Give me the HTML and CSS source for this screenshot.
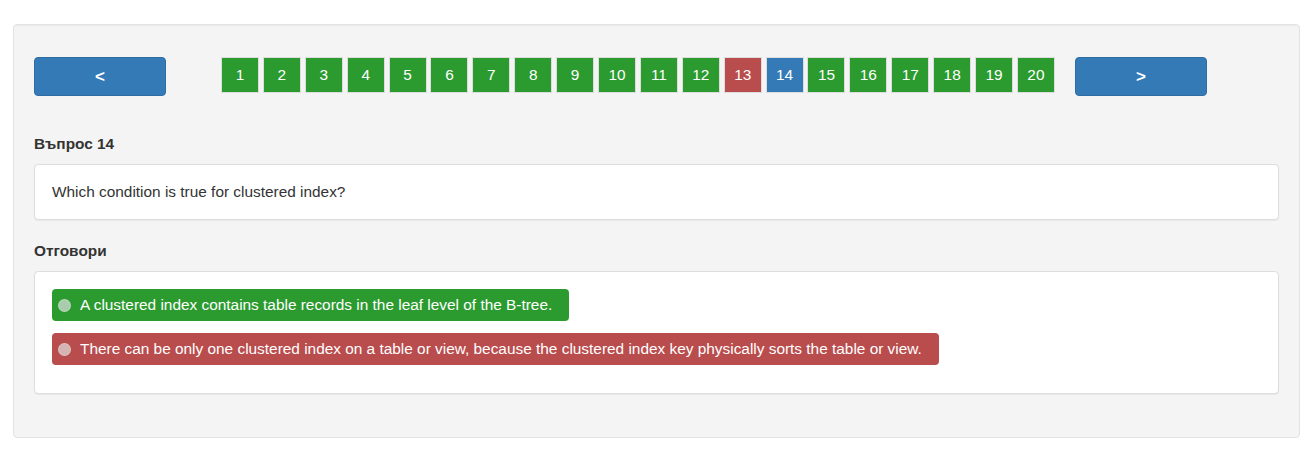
FILE: index.html
```html
<!DOCTYPE html>
<html lang="bg">
<head>
<meta charset="utf-8">
<title>Тест</title>
<link rel="stylesheet" href="styles.css">
</head>
<body>
<div class="well">
  <div class="nav">
    <button class="btn-nav">&lt;</button>
    <div class="pages"><span class="pg ok">1</span> <span class="pg ok">2</span> <span class="pg ok">3</span> <span class="pg ok">4</span> <span class="pg ok">5</span> <span class="pg ok">6</span> <span class="pg ok">7</span> <span class="pg ok">8</span> <span class="pg ok">9</span> <span class="pg ok">10</span> <span class="pg ok">11</span> <span class="pg ok">12</span> <span class="pg bad">13</span> <span class="pg cur">14</span> <span class="pg ok">15</span> <span class="pg ok">16</span> <span class="pg ok">17</span> <span class="pg ok">18</span> <span class="pg ok">19</span> <span class="pg ok">20</span></div>
    <button class="btn-nav">&gt;</button>
  </div>

  <div class="label">Въпрос 14</div>
  <div class="panel question">Which condition is true for clustered index?</div>

  <div class="label">Отговори</div>
  <div class="panel answers">
    <div class="answer"><span class="item correct"><span class="radio"></span>A clustered index contains table records in the leaf level of the B-tree.</span></div>
    <div class="answer"><span class="item wrong"><span class="radio"></span>There can be only one clustered index on a table or view, because the clustered index key physically sorts the table or view.</span></div>
  </div>
</div>
</body>
</html>
```

FILE: styles.css
```css
* { box-sizing: border-box; }

body {
  margin: 24px 11px 0 13px;
  font-family: "Liberation Sans", Arial, sans-serif;
  font-size: 15.4px;
  line-height: 20px;
  color: #333;
  background: #fff;
}

.well {
  background: #f4f4f4;
  border: 1px solid #e3e3e3;
  border-radius: 4px;
  box-shadow: inset 0 1px 1px rgba(0,0,0,0.04);
  padding: 32px 20px 43px 20px;
}

.nav {
  display: flex;
  align-items: flex-start;
  height: 39px;
  margin-bottom: 38px;
}

.btn-nav {
  width: 132px;
  height: 39px;
  background: #337ab7;
  border: 1px solid #2e6da4;
  border-radius: 4px;
  color: #fff;
  font-family: "Liberation Sans", Arial, sans-serif;
  font-size: 17px;
  font-weight: bold;
  padding: 0;
  line-height: 37px;
}

.pages {
  margin: 0 20px 0 55px;
  white-space: nowrap;
  font-size: 14px;
}

.pg {
  display: inline-block;
  width: 38px;
  height: 36px;
  line-height: 34px;
  text-align: center;
  color: #fff;
  border: 1px solid #ddd;
  font-size: 15.4px;
  vertical-align: top;
}

.pg.ok { background: #2b9b2f; }
.pg.bad { background: #b94c4c; }
.pg.cur { background: #337ab7; }

.label {
  font-weight: bold;
  margin-bottom: 10px;
}

.panel {
  background: #fff;
  border: 1px solid #ddd;
  border-radius: 4px;
  box-shadow: 0 1px 1px rgba(0,0,0,0.05);
}

.question {
  padding: 17px 17px;
  margin-bottom: 21px;
}

.answers {
  padding: 17px 17px 16px 17px;
}

.answer {
  margin-bottom: 12px;
}

.item {
  display: inline-flex;
  align-items: center;
  color: #fff;
  border-radius: 4px;
  padding: 6px 17px 6px 6px;
  line-height: 20px;
}

.item.correct { background: #2b9b2f; }
.item.wrong { background: #b94c4c; }

.radio {
  width: 13px;
  height: 13px;
  border-radius: 50%;
  background: rgba(225, 225, 225, 0.7);
  border: 1px solid rgba(255,255,255,0.2);
  margin-right: 9px;
  flex: none;
}
```
